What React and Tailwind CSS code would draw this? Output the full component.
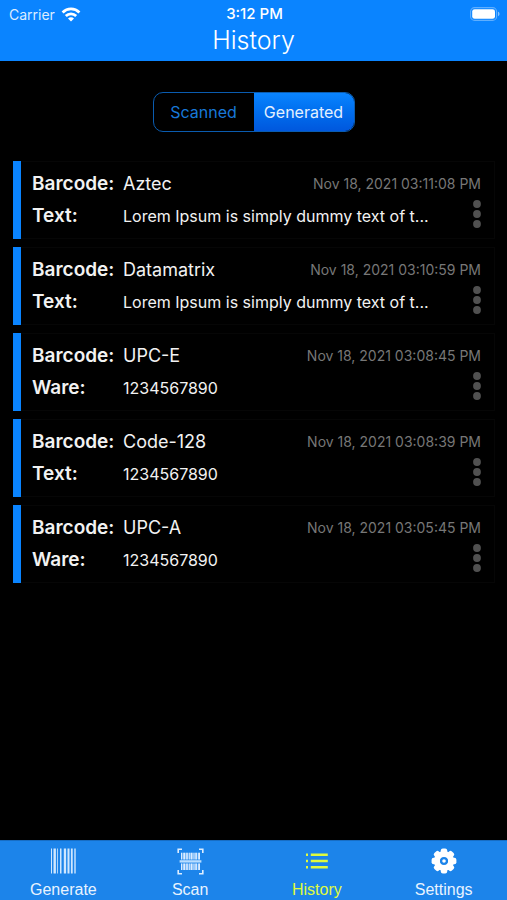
const records = [
  { type: 'Aztec', label: 'Text:', value: 'Lorem Ipsum is simply dummy text of t...', date: 'Nov 18, 2021 03:11:08 PM' },
  { type: 'Datamatrix', label: 'Text:', value: 'Lorem Ipsum is simply dummy text of t...', date: 'Nov 18, 2021 03:10:59 PM' },
  { type: 'UPC-E', label: 'Ware:', value: '1234567890', date: 'Nov 18, 2021 03:08:45 PM' },
  { type: 'Code-128', label: 'Text:', value: '1234567890', date: 'Nov 18, 2021 03:08:39 PM' },
  { type: 'UPC-A', label: 'Ware:', value: '1234567890', date: 'Nov 18, 2021 03:05:45 PM' },
];

function WifiIcon() {
  return (
    <svg viewBox="0 0 20 15" className="h-[15px] w-5" fill="none" stroke="white" strokeWidth="2.8" aria-hidden="true">
      <path d="M1.6 5.4a12 12 0 0 1 16.8 0" />
      <path d="M4.8 9a7.4 7.4 0 0 1 10.4 0" />
      <path d="M10 14.4 7 11.4a4.2 4.2 0 0 1 6 0z" fill="white" stroke="none" />
    </svg>
  );
}

function BatteryIcon() {
  return (
    <svg viewBox="0 0 30 14" className="h-[14px] w-[30px]" aria-hidden="true">
      <rect x="0.6" y="0.6" width="26" height="12.8" rx="4" fill="none" stroke="white" strokeOpacity="0.35" strokeWidth="1.1" />
      <rect x="2.2" y="2.2" width="22.8" height="9.6" rx="2.4" fill="white" />
      <path d="M28 4.8c2 .6 2 3.8 0 4.4z" fill="white" fillOpacity="0.5" />
    </svg>
  );
}

function DotsIcon() {
  return (
    <svg viewBox="0 0 8 28" className="h-7 w-2" fill="#505050" aria-hidden="true">
      <circle cx="4" cy="4" r="3.9" />
      <circle cx="4" cy="14" r="3.9" />
      <circle cx="4" cy="24" r="3.9" />
    </svg>
  );
}

function BarcodeIcon() {
  return (
    <svg viewBox="0 0 26 26" className="h-[26px] w-[26px]" fill="#cfe7ff" aria-hidden="true">
      <path d="M1 0.5h1v25H1zM3.5 0.5h2.4v25H3.5zM7.200 0.5h.8v25h-.8zM10 0.5h1.5v25H10zM13.800 0.5h2.300v25h-2.300zM17.500 0.5h2v25h-2zM20.900 0.5h1.800v25h-1.800zM24.300 0.5h1.400v25h-1.400z" />
    </svg>
  );
}

function ScanIcon() {
  return (
    <svg viewBox="0 0 27 27" className="h-[27px] w-[27px]" aria-hidden="true">
      <path d="M1.2 5V1.2H5M22 1.2h3.8V5M25.8 22v3.8H22M5 25.8H1.2V22" fill="none" stroke="#dcedff" strokeWidth="1.6" />
      <path d="M4 4.8h19v6.7H4zM4 15.4h19v6.7H4z" fill="#8cc6ff" fillOpacity="0.45" />
      <path d="M4 4.8h1.2v6.7H4zM6.3 4.8h2v6.7h-2zM9.2 4.8h1.6v6.7H9.2zM11.8 4.8h1v6.7h-1zM13.6 4.8h1.9v6.7h-1.9zM16.5 4.8h1v6.7h-1zM18.3 4.8h1.6v6.7h-1.6zM21.2 4.8H23v6.7h-1.8zM4 15.4h1.2v6.7H4zM6.3 15.4h2v6.7h-2zM9.2 15.4h1.6v6.7H9.2zM11.8 15.4h1v6.7h-1zM13.6 15.4h1.9v6.7h-1.9zM16.5 15.4h1v6.7h-1zM18.3 15.4h1.6v6.7h-1.6zM21.2 15.4H23v6.7h-1.8z" fill="#dcedff" />
      <path d="M2.6 12.2h21.8v2.4H2.6z" fill="#b9deff" />
    </svg>
  );
}

function ListIcon() {
  return (
    <svg viewBox="0 0 24 18" className="h-[18px] w-6" fill="#e0fb3c" aria-hidden="true">
      <path d="M1 1.500h2v2.500H1zM5.800 1.500h17V4h-17zM1 7.750h2v2.500H1zM5.800 7.750h17v2.500h-17zM1 14h2v2.500H1zM5.800 14h17v2.500h-17z" />
    </svg>
  );
}

function GearIcon() {
  const angles = [0, 45, 90, 135, 180, 225, 270, 315];
  return (
    <svg viewBox="0 0 26 26" className="h-[26px] w-[26px]" aria-hidden="true">
      {angles.map((a) => (
        <rect key={a} x="9.8" y="0.6" width="6.4" height="8" rx="2" fill="white" transform={`rotate(${a} 13 13)`} />
      ))}
      <circle cx="13" cy="13" r="7.1" fill="none" stroke="white" strokeWidth="6" />
      <circle cx="13" cy="13" r="1.8" fill="white" />
    </svg>
  );
}

const tabs = [
  { name: 'Generate', Icon: BarcodeIcon },
  { name: 'Scan', Icon: ScanIcon },
  { name: 'History', Icon: ListIcon, active: true },
  { name: 'Settings', Icon: GearIcon },
];

function RecordCard({ record }) {
  return (
    <li className="flex h-[78px] border-l-8 border-[#0a84ff]">
      <div className="flex min-w-0 flex-1 items-end justify-between border-y border-r border-[#060606] pr-[13px] pl-[11px]">
        <dl className="grid min-w-0 flex-1 grid-cols-[91px_1fr] gap-y-2 self-start pt-[10px] leading-6">
          <dt className="text-[19px] font-semibold">Barcode:</dt>
          <dd className="-mr-2 flex items-center justify-between text-[18px]">
            <span>{record.type}</span>
            <time className="text-[14px] text-[#777777]">{record.date}</time>
          </dd>
          <dt className="text-[19px] font-semibold">{record.label}</dt>
          <dd className="truncate text-[16px]">{record.value}</dd>
        </dl>
        <button type="button" aria-label="More actions" className="mb-[10px]">
          <DotsIcon />
        </button>
      </div>
    </li>
  );
}

export default function App() {
  return (
    <div className="flex min-h-screen flex-col bg-black font-['Inter',sans-serif] text-[#f2f2f2]">
      <header className="h-[61px] bg-[#0a84ff] text-white">
        <div className="grid h-7 grid-cols-3 items-center pr-[7px] pl-[9px] text-[14px]">
          <div className="flex items-center gap-[6px] text-[#dcecff]">
            <span>Carrier</span>
            <WifiIcon />
          </div>
          <span className="text-center text-[15px] font-medium">3:12 PM</span>
          <div className="flex justify-end">
            <BatteryIcon />
          </div>
        </div>
        <h1 className="text-center text-[25px] leading-6 font-light">History</h1>
      </header>

      <main className="flex-1">
        <div className="mx-auto mt-[31px] flex h-10 w-[202px] overflow-hidden rounded-[10px] border border-[#0a5cb0] text-[16px]">
          <button type="button" className="flex-1 text-[#1878d8]">Scanned</button>
          <button type="button" aria-pressed="true" className="flex-1 bg-linear-to-b from-[#0a84ff] to-[#0057dd] text-[#e4f0ff]">
            Generated
          </button>
        </div>
        <ul className="mt-[29px] flex flex-col gap-2 pr-3 pl-[13px]">
          {records.map((record) => (
            <RecordCard key={record.date} record={record} />
          ))}
        </ul>
      </main>

      <nav className="grid h-[60px] grid-cols-4 border-t border-[#176dc4] bg-[#1c84ea] font-['Liberation_Sans',Arial,sans-serif] text-[16px]">
        {tabs.map(({ name, Icon, active }) => (
          <a
            key={name}
            href={`#${name.toLowerCase()}`}
            aria-current={active ? 'page' : undefined}
            className={active ? 'flex flex-col items-center pt-[6px] text-[#e0fb3c]' : 'flex flex-col items-center pt-[6px] text-[#e8f3ff]'}
          >
            <span className="flex h-7 items-center">
              <Icon />
            </span>
            <span className="mt-[5px] leading-5">{name}</span>
          </a>
        ))}
      </nav>
    </div>
  );
}
